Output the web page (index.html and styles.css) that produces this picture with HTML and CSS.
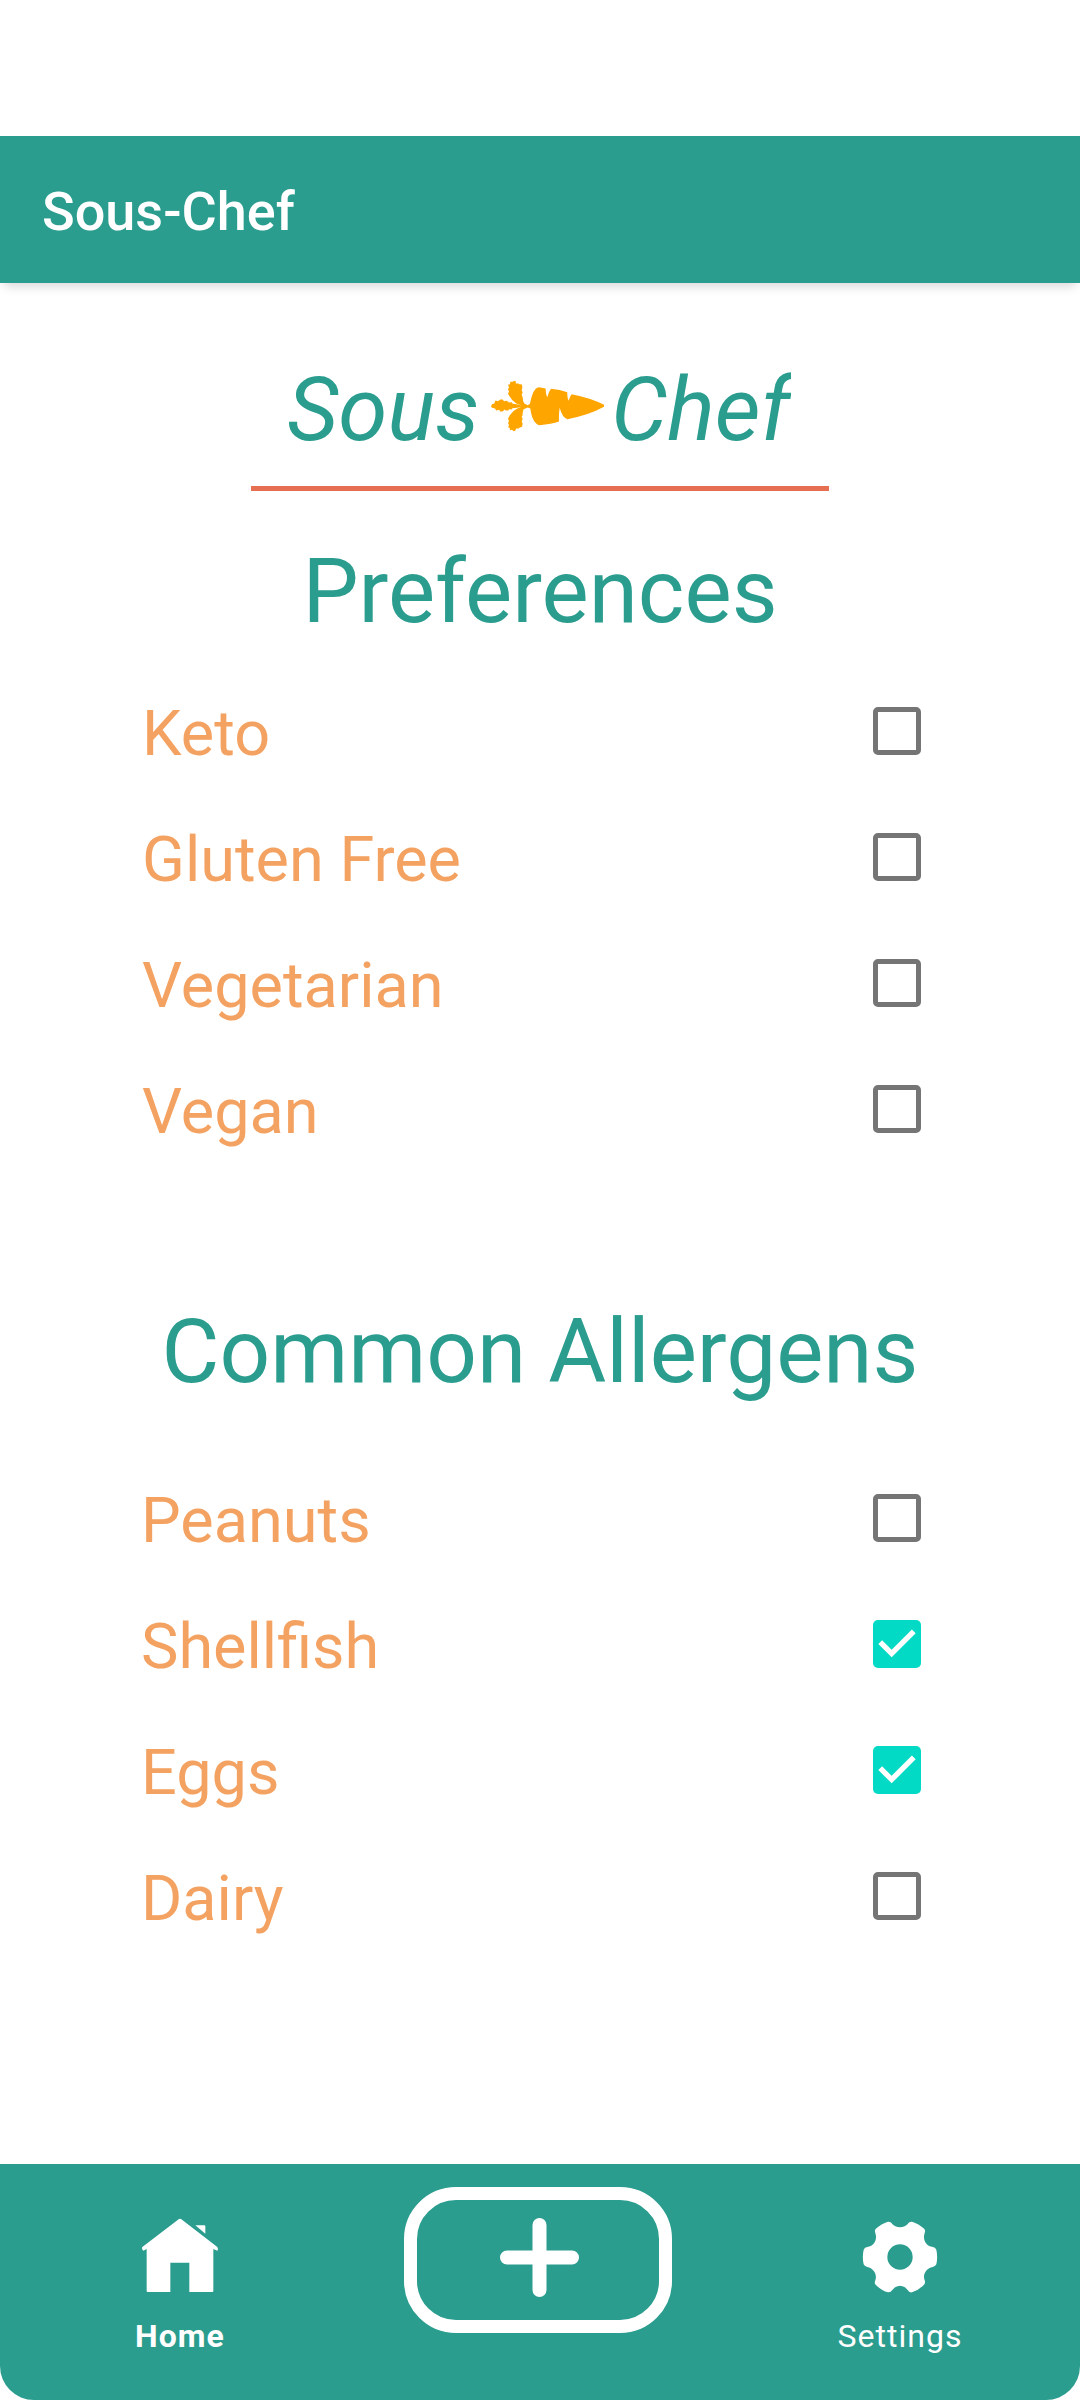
FILE: index.html
```html
<!DOCTYPE html>
<html lang="en">
<head>
<meta charset="utf-8">
<title>Sous-Chef</title>
<link rel="stylesheet" href="styles.css">
</head>
<body>
<div class="screen">
  <header class="app-bar">Sous-Chef</header>

  <main class="content">
    <div class="logo">
      <span class="logo-word">Sous</span>
      <svg class="carrot" viewBox="30 45 345 155" aria-hidden="true">
        <path d="M150 116C154 92 163 66 177 66L197 70Q197 88 202 96Q205 81 213 71Q240 73 262 81Q261 97 266 107Q269 94 275 87Q336 99 372 119L372 125Q325 151 262 162Q247 158 239 128Q236 148 237 169Q215 177 178 180C162 176 154 154 151 130L143 127L131 132Q127 140 128 150L125 155L128 162L125 168L128 176L126 185L118 188L116 190L108 190L106 197L101 198L96 194L90 195L89 188L84 186L87 180L84 173L87 168L84 161L89 151Q97 137 112 130L126 124L112 128L97 129L95 133L87 132L85 136L77 136L74 133L68 139L60 139L58 134L49 136L45 130L36 128L33 123L36 117L43 115L46 106L54 108L61 103L68 103L72 108L80 107L87 112L95 111L98 116L110 117L125 121L109 115Q96 107 89 94L84 86L87 79L84 72L87 66L84 59L90 57L91 50L98 50L104 47L108 50L107 55L115 55L118 57L126 58L127 68L125 75L128 82L125 89L128 96Q128 108 133 115L143 120Z"/>
      </svg>
      <span class="logo-word logo-word-end">Chef</span>
    </div>
    <hr class="divider">

    <h1 class="section-title">Preferences</h1>
    <ul class="options preferences">
      <li class="option"><span class="option-label">Keto</span><span class="box"></span></li>
      <li class="option"><span class="option-label">Gluten Free</span><span class="box"></span></li>
      <li class="option"><span class="option-label">Vegetarian</span><span class="box"></span></li>
      <li class="option"><span class="option-label">Vegan</span><span class="box"></span></li>
    </ul>

    <h1 class="section-title allergens-title">Common Allergens</h1>
    <ul class="options allergens">
      <li class="option"><span class="option-label">Peanuts</span><span class="box"></span></li>
      <li class="option"><span class="option-label">Shellfish</span><span class="box checked"><svg viewBox="3 3 18 18"><path d="M10 17l-5-5 1.41-1.41L10 14.17l7.59-7.59L19 8z"/></svg></span></li>
      <li class="option"><span class="option-label">Eggs</span><span class="box checked"><svg viewBox="3 3 18 18"><path d="M10 17l-5-5 1.41-1.41L10 14.17l7.59-7.59L19 8z"/></svg></span></li>
      <li class="option"><span class="option-label">Dairy</span><span class="box"></span></li>
    </ul>
  </main>

  <nav class="bottom-nav">
    <a class="tab active">
      <svg class="tab-icon" viewBox="422 230 234 234" aria-hidden="true">
        <path d="M533 238Q539 233 545 238L650 319Q655 325 651 331L639 326V452Q639 455 636 455H567V367H510V455H442Q439 455 439 452V326L429 331Q423 326 426 320ZM585 255H612Q615 255 615 258V280Z"/>
      </svg>
      <span class="tab-label">Home</span>
    </a>
    <a class="add">
      <svg class="plus" viewBox="0 0 79 79" aria-hidden="true"><path d="M39.5 7V72M7 39.5H72"/></svg>
    </a>
    <a class="tab">
      <svg class="tab-icon" viewBox="182 109 234 234" aria-hidden="true">
        <path fill-rule="evenodd" d="M263 123Q271 122 276 130Q283 139 299 140Q315 139 322 130Q327 122 335 123Q355 129 372 145Q376 150 373 157C366 178 378 197 397 199Q405 200 408 207Q413 229 408 251Q405 258 397 259C378 263 366 281 373 299Q376 307 371 312Q355 329 335 335Q327 337 322 328Q314 316 299 315Q284 316 276 328Q271 336 263 335Q243 330 226 312Q221 307 225 299C231 281 220 263 201 259Q193 258 190 251Q185 229 190 207Q193 200 201 199C220 197 232 178 225 157Q222 150 226 145Q243 129 263 123ZM299 191A38 38 0 1 0 299 267A38 38 0 1 0 299 191Z"/>
      </svg>
      <span class="tab-label">Settings</span>
    </a>
  </nav>
</div>
</body>
</html>
```
FILE: styles.css
```css
* { box-sizing: border-box; }

body {
  margin: 0;
  background: #fff;
  font-family: Roboto, sans-serif;
}

.screen {
  display: flex;
  flex-direction: column;
  width: 1080px;
  height: 2400px;
  padding-top: 136px;
  overflow: hidden;
}

.app-bar {
  flex: none;
  height: 147px;
  padding: 2px 42px 0;
  background: #2a9d8f;
  box-shadow: 0 7px 10px -4px rgba(0, 0, 0, 0.16);
  color: #fff;
  font-size: 54px;
  font-weight: 500;
  line-height: 147px;
}

.content {
  flex: 1;
  display: flex;
  flex-direction: column;
  align-items: center;
  padding-top: 74px;
}

.logo {
  display: flex;
  align-items: flex-start;
  width: 506px;
  height: 105px;
  color: #2a9d8f;
  font-size: 89px;
  font-style: italic;
  line-height: 105px;
}

.logo-word { width: 192px; }

.logo-word-end {
  width: 180px;
  margin-left: 6px;
  overflow: hidden;
}

.carrot {
  width: 115px;
  height: 52px;
  margin: 23px 0 0 11px;
  fill: #ffa500;
}

.divider {
  width: 578px;
  height: 5px;
  margin: 24px 0 0;
  border: 0;
  background: #e76f51;
}

.section-title {
  height: 105px;
  margin: 48px 0 0;
  color: #2a9d8f;
  font-size: 89px;
  font-weight: 400;
  line-height: 105px;
}

.options {
  width: 798px;
  margin: 24px 0 0;
  padding: 0;
  list-style: none;
}

.preferences { padding-left: 1px; }

.option {
  display: flex;
  align-items: center;
  justify-content: space-between;
  height: 126px;
}

.option-label {
  padding-top: 5px;
  color: #f4a261;
  font-size: 63px;
  line-height: 74px;
}

.box {
  width: 48px;
  height: 48px;
  margin-right: 18px;
  border: 5px solid #757575;
  border-radius: 5px;
}

.box.checked {
  border: 0;
  background: #03dac5;
}

.box svg {
  display: block;
  fill: #fff;
}

.allergens-title { margin-top: 127px; }

.allergens { margin-top: 51px; }

.bottom-nav {
  flex: none;
  display: grid;
  grid-template-columns: repeat(3, 360px);
  justify-items: center;
  height: 236px;
  border-radius: 0 0 34px 34px;
  background: #2a9d8f;
  color: #fff;
}

.tab {
  display: flex;
  flex-direction: column;
  align-items: center;
  padding-top: 53px;
}

.tab-icon {
  width: 78px;
  height: 78px;
  fill: #fff;
}

.tab-label {
  margin-top: 23px;
  font-size: 32px;
  line-height: 37px;
  letter-spacing: 1.05px;
}

.active .tab-label { font-weight: 700; }

.add {
  display: grid;
  place-items: center;
  width: 268px;
  height: 146px;
  margin: 23px 4px 0 0;
  border: 13px solid #fff;
  border-radius: 52px;
}

.plus {
  width: 79px;
  height: 79px;
  margin: -6px 0 0 2px;
  fill: none;
  stroke: #fff;
  stroke-width: 14px;
  stroke-linecap: round;
}
```
